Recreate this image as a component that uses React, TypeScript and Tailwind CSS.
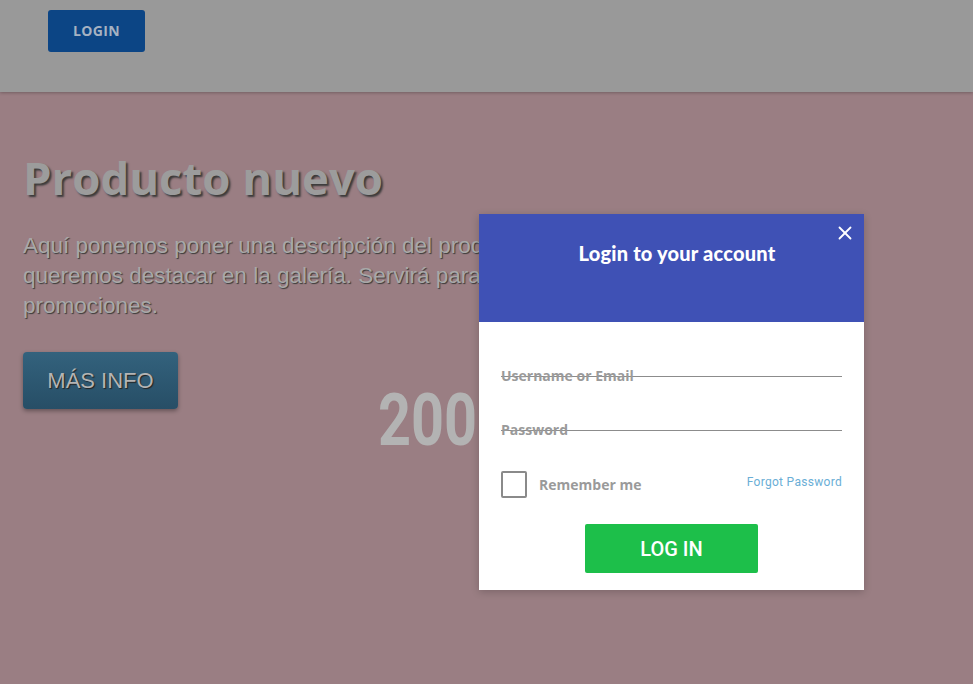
import { X } from 'lucide-react';

export default function App() {
  return (
    <div className="relative w-[973px] h-[684px] overflow-hidden bg-[#9a7e83] font-['Open_Sans',sans-serif]">
      {/* Top bar (dimmed by modal backdrop) */}
      <header className="h-[92px] bg-[#999999] shadow-[0_1px_3px_rgba(0,0,0,0.25)] px-[48px] pt-[10px]">
        <button className="w-[97px] h-[42px] rounded-[3px] bg-[#0c4585] text-[#a6b2c2] text-[14px] leading-[40px] font-bold tracking-wide">
          LOGIN
        </button>
      </header>

      {/* Hero */}
      <section className="relative px-[23px] pt-[58px]">
        <h1 className="text-[45.5px] leading-[54px] font-bold text-[#9c9c9c] [text-shadow:2px_2px_2px_#3a3a3a]">
          Producto nuevo
        </h1>
        <p className="mt-[27px] text-[22.5px] leading-[30px] text-[#a8a8a8] font-['Liberation_Sans',Arial,sans-serif] [text-shadow:1px_1px_1px_#3a3a3a]">
          Aquí ponemos poner una descripción del producto que
          <br />
          queremos destacar en la galería. Servirá para ofertas y
          <br />
          promociones.
        </p>
        <div className="flex items-start mt-[31px]">
          <button className="w-[155px] h-[57px] rounded-[4px] bg-gradient-to-b from-[#33627d] to-[#274e66] shadow-[0_2px_4px_rgba(0,0,0,0.35)] text-[22px] text-[#b4b4b4] font-['Liberation_Sans',Arial,sans-serif] [text-shadow:1px_1px_1px_#222]">
            MÁS INFO
          </button>
          <span className="ml-[200px] mt-[34px] inline-block origin-left scale-x-[0.8] text-[72px] leading-[70px] font-bold text-[#b3b3b3] font-['Roboto',sans-serif]">
            2000
          </span>
        </div>
      </section>

      {/* Modal */}
      <div className="absolute left-[479px] top-[214px] w-[385px] bg-white shadow-[0_2px_8px_rgba(0,0,0,0.2)]">
        <div className="relative h-[108px] bg-[#3f51b5] pt-[24px] pl-[11px] text-center">
          <h2 className="text-[20px] font-black text-white font-['Lato',sans-serif] tracking-[0.2px]">
            Login to your account
          </h2>
          <button className="absolute right-[8px] top-[8px] text-white">
            <X size={22} strokeWidth={2} />
          </button>
        </div>

        <div className="px-[22px] pt-[54px] pb-[17px]">
          <div className="relative h-px bg-[#8c8c8c]">
            <span className="absolute left-0 -top-[9px] text-[14px] leading-[18px] font-bold text-[#9a9a9a]">
              Username or Email
            </span>
          </div>
          <div className="relative h-px bg-[#8c8c8c] mt-[53px]">
            <span className="absolute left-0 -top-[9px] text-[14px] leading-[18px] font-bold text-[#9a9a9a]">
              Password
            </span>
          </div>

          <div className="flex items-start justify-between mt-[40px]">
            <label className="flex items-center gap-[12px]">
              <span className="w-[26px] h-[27px] border-2 border-[#8a8a8a] rounded-[2px]" />
              <span className="text-[14px] leading-[18px] font-bold text-[#9a9a9a]">Remember me</span>
            </label>
            <a className="text-[12px] text-[#6aaed6] font-['Roboto',sans-serif] tracking-[0.3px] leading-[14px] mt-[4px]">
              Forgot Password
            </a>
          </div>

          <div className="flex justify-center mt-[26px]">
            <button className="w-[173px] h-[49px] rounded-[2px] bg-[#1dbf4a] text-white text-[20px] font-medium font-['Roboto',sans-serif]">
              LOG IN
            </button>
          </div>
        </div>
      </div>
    </div>
  );
}
